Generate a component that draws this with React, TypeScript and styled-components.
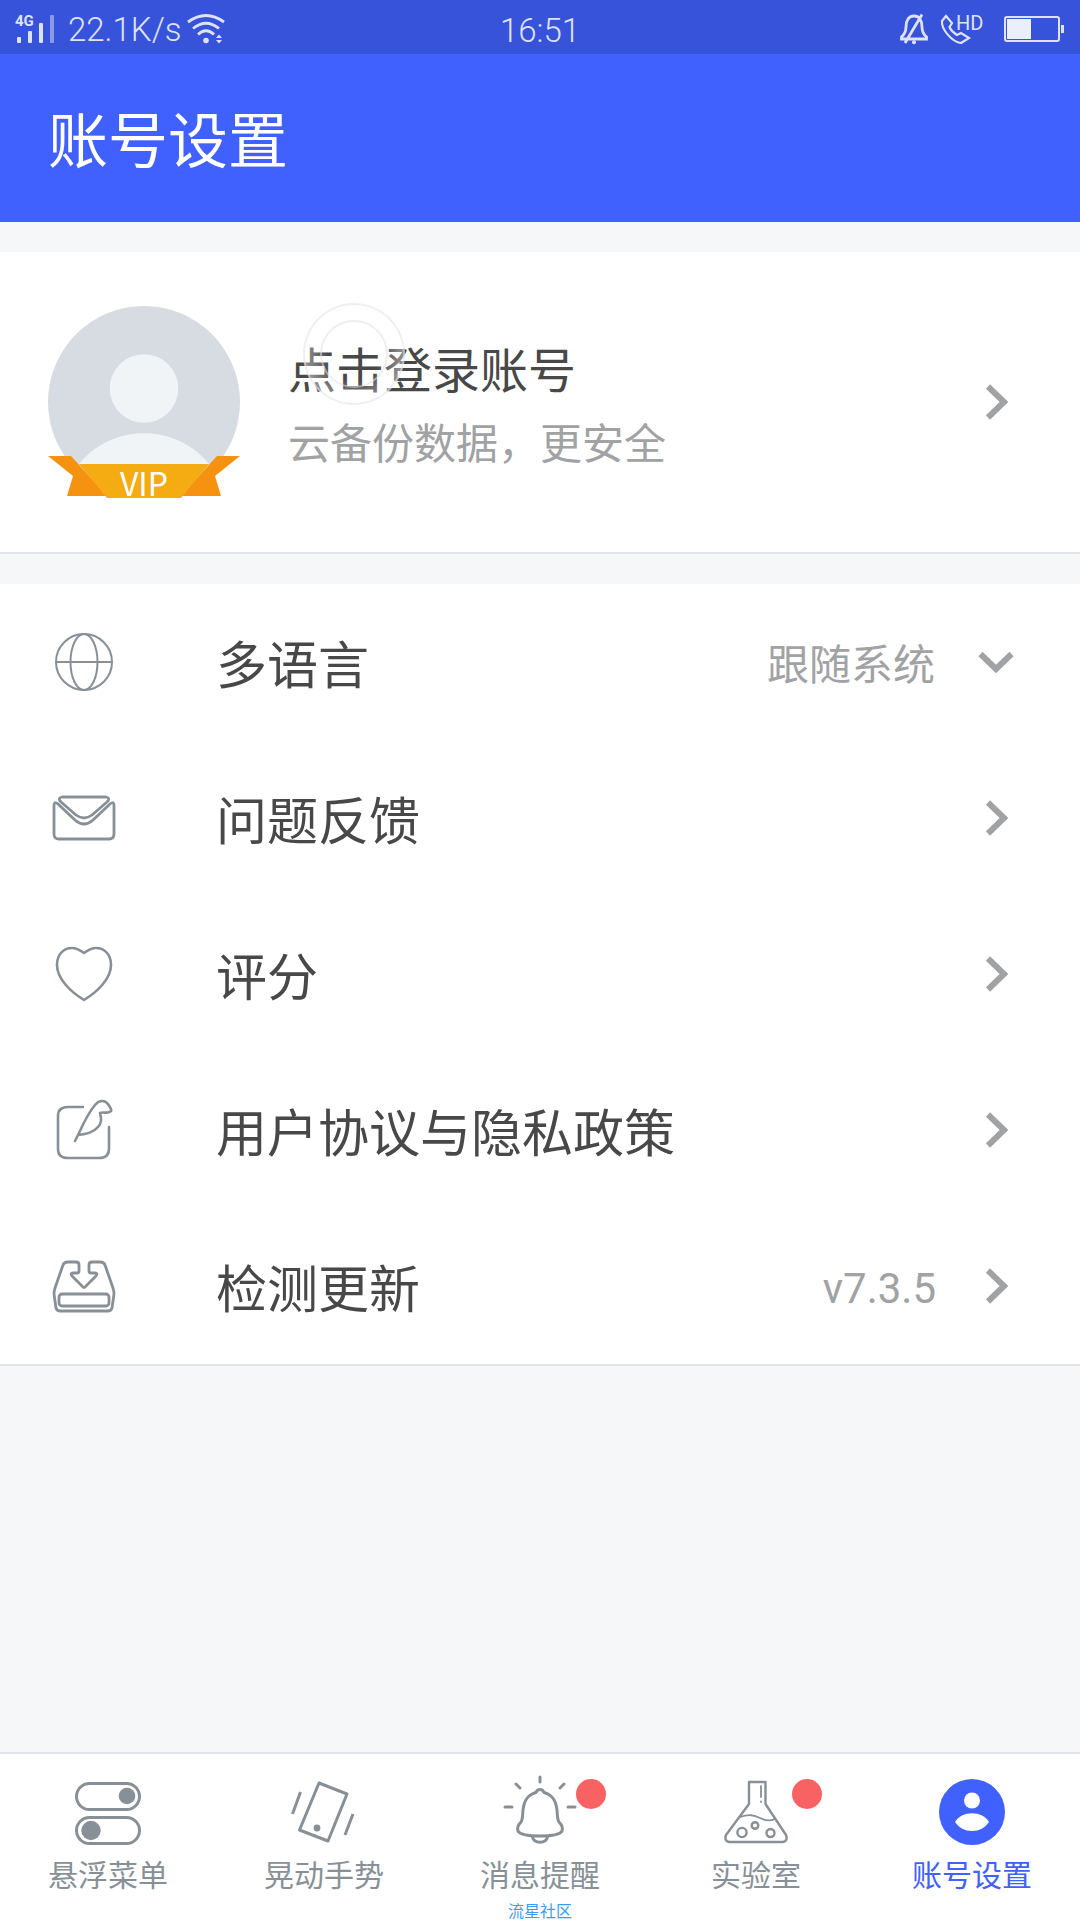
import React, { ReactNode } from "react";
import styled, { createGlobalStyle } from "styled-components";

const color = {
  primary: "#4161ff",
  primaryDark: "#3753d9",
  page: "#f5f7f9",
  line: "#e0e5ec",
  text: "#484848",
  muted: "#a1a2a4",
  icon: "#889097",
  badge: "#f96262",
};

const GlobalStyle = createGlobalStyle`
  * { box-sizing: border-box; }
  body {
    margin: 0;
    background: ${color.page};
    font-family: Roboto, "Noto Sans CJK SC", sans-serif;
    font-weight: 400;
    color: ${color.text};
  }
  button, select { font: inherit; color: inherit; }
  a { color: inherit; text-decoration: none; }
`;

const Screen = styled.div`
  position: relative;
  display: flex;
  flex-direction: column;
  min-height: 100vh;
`;

const StatusBar = styled.div`
  display: grid;
  grid-template-columns: 1fr auto 1fr;
  align-items: center;
  height: 54px;
  padding: 0 16px;
  background: ${color.primaryDark};
  color: #dde2fa;
  font-family: Roboto, sans-serif;
  font-size: 33px;
  font-weight: 350;
  line-height: 54px;
`;

const StatusGroup = styled.div<{ $end?: boolean }>`
  display: flex;
  align-items: center;
  justify-content: ${(p) => (p.$end ? "flex-end" : "flex-start")};
`;

const Speed = styled.span`
  padding-top: 2px;
  margin: 0 6px 0 12px;
`;

const Clock = styled.time`
  padding-top: 4px;
`;

const Header = styled.header`
  display: flex;
  align-items: center;
  height: 168px;
  padding: 10px 48px 0;
  background: ${color.primary};
  color: #fff;
`;

const Title = styled.h1`
  margin: 0;
  font-size: 60px;
  font-weight: 400;
  line-height: 72px;
`;

const Content = styled.main`
  flex: 1;
  display: flex;
  flex-direction: column;
  gap: 30px;
  padding: 30px 0;
`;

const ProfileCard = styled.button`
  position: relative;
  display: flex;
  align-items: center;
  gap: 48px;
  width: 100%;
  height: 302px;
  padding: 0 60px 0 48px;
  border: 0;
  border-bottom: 2px solid ${color.line};
  background: #fff;
  text-align: left;
`;

const ProfileText = styled.span`
  flex: 1;
  display: flex;
  flex-direction: column;
  gap: 4px;
  padding-top: 10px;
`;

const ProfileName = styled.span`
  font-size: 48px;
  line-height: 72px;
`;

const ProfileHint = styled.span`
  font-size: 42px;
  line-height: 66px;
  color: ${color.muted};
`;

const Ripple = styled.span`
  position: absolute;
  left: 303px;
  top: 51px;
  width: 102px;
  height: 102px;
  border: 2px solid rgba(225, 225, 225, 0.55);
  border-radius: 50%;
  background: radial-gradient(circle, rgba(255, 255, 255, 0) 38%, rgba(255, 255, 255, 0.4) 70%);

  &::after {
    content: "";
    position: absolute;
    inset: 15px;
    border: 2px solid rgba(225, 225, 225, 0.55);
    border-radius: 50%;
  }
`;

const List = styled.ul`
  margin: 0;
  padding: 0;
  list-style: none;
  background: #fff;
  border-bottom: 2px solid ${color.line};
`;

const rowLayout = `
  display: flex;
  align-items: center;
  height: 156px;
  padding: 0 60px 0 51px;
`;

const RowLink = styled.a`
  ${rowLayout}
`;

const RowField = styled.label`
  ${rowLayout}
`;

const RowLabel = styled.span`
  flex: 1;
  padding: 10px 0 0 99px;
  font-size: 51px;
  line-height: 72px;
`;

const RowValue = styled.span`
  padding-top: 6px;
  margin-right: 36px;
  font-size: 42px;
  line-height: 60px;
  color: ${color.muted};
`;

const RowSelect = styled.select`
  appearance: none;
  margin: 0 36px 0 0;
  padding: 8px 0 0;
  border: 0;
  background: transparent;
  font-size: 42px;
  line-height: 60px;
  color: ${color.muted};
`;

const TabBar = styled.nav`
  display: flex;
  height: 168px;
  border-top: 2px solid ${color.line};
  background: #fff;
`;

const Tab = styled.a<{ $active?: boolean }>`
  flex: 1;
  display: flex;
  flex-direction: column;
  align-items: center;
  gap: 9px;
  padding-top: 25px;
  font-size: 30px;
  line-height: 44px;
  color: ${(p) => (p.$active ? color.primary : color.icon)};
`;

const TabIcon = styled.span`
  position: relative;
  display: flex;
`;

const Badge = styled.span`
  position: absolute;
  left: 69px;
  top: 0;
  width: 30px;
  height: 30px;
  border-radius: 50%;
  background: ${color.badge};
`;

const Watermark = styled.span`
  position: absolute;
  left: 50%;
  bottom: 0;
  transform: translateX(-50%);
  font-size: 16px;
  line-height: 16px;
  color: #3d9bf0;
`;

const Drawing = styled.svg`
  display: block;
  flex: none;
  overflow: visible;
`;

const LineIcon = ({ width = 3, children }: { width?: number; children: ReactNode }) => (
  <Drawing
    width="66"
    height="66"
    viewBox="0 0 66 66"
    fill="none"
    stroke={color.icon}
    strokeWidth={width}
    strokeLinecap="round"
    strokeLinejoin="round"
    aria-hidden="true"
  >
    {children}
  </Drawing>
);

const GlobeIcon = () => (
  <LineIcon width={2}>
    <circle cx="33" cy="33" r="28" />
    <ellipse cx="33" cy="33" rx="13.5" ry="28" />
    <path d="M5 33H61" />
  </LineIcon>
);

const MailIcon = () => (
  <LineIcon width={2.8}>
    <path d="M11 12H55Q60 13 56 17L41 30Q33 36 25 30L10 17Q6 13 11 12Z" />
    <path d="M3 49V20Q3 16 7 19L24 35Q33 43 42 35L59 19Q63 16 63 20V49Q63 54 58 54H8Q3 54 3 49Z" />
  </LineIcon>
);

const HeartIcon = () => (
  <LineIcon width={2.6}>
    <path d="M33 12C29 9 25 7 21 7C12 7 6 14 6 24C6 38 20 51 33 59C46 51 60 38 60 24C60 14 54 7 45 7C41 7 37 9 33 12Z" />
  </LineIcon>
);

const QuillIcon = () => (
  <LineIcon width={2.6}>
    <path d="M32 10H17Q7 10 7 19V52Q7 61 17 61H48Q58 61 58 52V30" />
    <path d="M24 44L28 36C33 25 38 15 44 8C48 3 53 3 56 6C58 8 59 10 60 12C61 14 59 15 57 15.500C54 16 51 15 49 16C51 22 50 27 47 30C42 36 35 37 27 38" />
  </LineIcon>
);

const UpdateIcon = () => (
  <LineIcon width={2.8}>
    <path d="M17 9H25Q28 9 28 12V18Q28 20 26 20H22Q19 20 21 23L31 33Q33 36 35 33L45 23Q47 20 44 20H40Q38 20 38 18V12Q38 9 41 9H49Q53 9 54 12L62 35Q63 38 63 41L61 55Q60 58 57 58H9Q6 58 5 55L3 41Q3 38 4 35L12 12Q13 9 17 9Z" />
    <rect x="8" y="41" width="50" height="12" rx="3" />
  </LineIcon>
);

const TogglesIcon = () => (
  <LineIcon>
    <rect x="1.500" y="4.500" width="63" height="26" rx="13" />
    <rect x="1.500" y="38.500" width="63" height="26" rx="13" />
    <g fill={color.icon} stroke="none">
      <circle cx="52" cy="17" r="8.300" />
      <circle cx="16" cy="51.500" r="9.700" />
    </g>
  </LineIcon>
);

const ShakeIcon = () => (
  <LineIcon>
    <path d="M28 4L56 15L37 62L8.500 51Z" />
    <path strokeLinecap="butt" d="M9.500 13L1.500 35M62 35L54 56" />
    <circle cx="26" cy="49" r="3.400" fill={color.icon} stroke="none" />
  </LineIcon>
);

const BellIcon = () => (
  <LineIcon>
    <path d="M33 10.500Q30 10.500 29 13.500C20 16 17 22 16 31C15.500 36 16 40 14 43C11 46 10 49 11 52C13 56 24 57 33 57C42 57 53 56 55 52C56 49 55 46 52 43C50 40 50.500 36 50 31C49 22 46 16 37 13.500Q36 10.500 33 10.500Z" />
    <path d="M25.500 58C27 65 39 65 40.500 58" />
    <path d="M33-2V3M9 5L13 9M57 5L53 9M-2 28H5M61 28H68" />
  </LineIcon>
);

const FlaskIcon = () => (
  <LineIcon width={2.4}>
    <path d="M26 3H42.500V25L63 56Q65 62 60 63H6Q1 62 3 56L26 25Z" />
    <path strokeWidth="1.800" d="M17 38C26 35 31 36 37 39C43 42 48 42 52 40M38 7V18M38 22.500V23" />
    <circle cx="19" cy="53.500" r="4.600" />
    <circle cx="32" cy="46.500" r="3.300" />
    <circle cx="47.500" cy="54" r="4" />
  </LineIcon>
);

const AccountIcon = () => (
  <Drawing width="66" height="66" viewBox="0 0 66 66" fill="#fff" aria-hidden="true">
    <circle cx="33" cy="33" r="33" fill={color.primary} />
    <circle cx="33" cy="21.500" r="8" />
    <path d="M16 43C20 37 26 34.300 33 34.300S46 37 50 43C46 49 40 52 33 52S20 49 16 43Z" />
  </Drawing>
);

const Chevron = ({ down }: { down?: boolean }) => (
  <Drawing width="48" height="48" viewBox="0 0 48 48" fill="none" stroke={color.muted} strokeWidth="6" aria-hidden="true">
    <path d={down ? "M8.500 16L24 31L39.500 16" : "M16 8.500L32 24L16 39.500"} />
  </Drawing>
);

const Avatar = () => (
  <Drawing width="192" height="192" viewBox="0 0 192 192" role="img" aria-label="VIP">
    <circle cx="96" cy="96" r="96" fill="#d7dbe2" />
    <circle cx="96" cy="82.500" r="34.300" fill="#f0f4f7" />
    <path d="M31 158C64 117 128 117 161 158Z" fill="#f0f4f7" />
    <path d="M0 150H23L59 190H19L25 170ZM192 150H169L133 190H173L167 170Z" fill="#f59311" />
    <path d="M31 158H161L133 192H59Z" fill="#f5ab12" />
    <text x="96" y="190" textAnchor="middle" fill="#fff" fontSize="32" fontWeight="400" fontFamily="Noto Sans CJK SC, sans-serif">
      VIP
    </text>
  </Drawing>
);

const SignalIcon = () => (
  <Drawing width="40" height="54" viewBox="0 0 40 54" fill="currentColor" role="img" aria-label="4G">
    <text x="-1" y="24" fontSize="15" fontWeight="700" fontFamily="Roboto, sans-serif">
      4G
    </text>
    <rect x="1" y="35" width="4" height="6" rx="1" />
    <rect x="12" y="29" width="4" height="12" rx="1" />
    <rect x="23" y="21" width="4" height="20" rx="1" />
    <rect x="34" y="13" width="4" height="28" rx="1" opacity="0.5" />
  </Drawing>
);

const WifiIcon = () => (
  <Drawing width="38" height="54" viewBox="0 0 38 54" fill="none" stroke="currentColor" strokeWidth="2.800" aria-hidden="true">
    <path d="M0 20Q18 7 36 20M5 26.500Q18 16 31 26.500M10 32.500Q18 25 26 32.500" />
    <g fill="currentColor" stroke="none">
      <circle cx="18" cy="38.500" r="2.800" />
      <path d="M28 36L31 32.500L34 36ZM28 38L31 41.500L34 38Z" />
    </g>
  </Drawing>
);

const StatusIcons = () => (
  <Drawing width="164" height="54" viewBox="900 0 164 54" fill="none" stroke="currentColor" strokeWidth="2.800" aria-hidden="true">
    <path d="M901.500 37V35Q906 31 906 25C906 18 909 14 914 14S922 18 922 25Q922 31 926.500 35V37ZM922 12.500L905 41" />
    <circle cx="914" cy="40.300" r="2" fill="currentColor" stroke="none" />
    <path strokeWidth="2.200" d="M946 14L942 19C941 27 952 40 961 41L969 36L961 31L957 33Q951 29 949.500 25L952 21Z" />
    <text x="956" y="28" fontSize="20" fontWeight="400" fill="currentColor" stroke="none">
      HD
    </text>
    <rect x="1005" y="15" width="54" height="24" rx="2" strokeWidth="2" />
    <rect x="1007" y="17" width="24" height="20" fill="#ebeefb" stroke="none" />
    <rect x="1061" y="23" width="3" height="8" fill="currentColor" stroke="none" />
  </Drawing>
);

const links = [
  { label: "问题反馈", Icon: MailIcon },
  { label: "评分", Icon: HeartIcon },
  { label: "用户协议与隐私政策", Icon: QuillIcon },
  { label: "检测更新", Icon: UpdateIcon, value: "v7.3.5" },
];

const tabs = [
  { label: "悬浮菜单", Icon: TogglesIcon },
  { label: "晃动手势", Icon: ShakeIcon },
  { label: "消息提醒", Icon: BellIcon, badge: true },
  { label: "实验室", Icon: FlaskIcon, badge: true },
  { label: "账号设置", Icon: AccountIcon, active: true },
];

export default function App() {
  return (
    <Screen>
      <GlobalStyle />
      <StatusBar>
        <StatusGroup>
          <SignalIcon />
          <Speed>22.1K/s</Speed>
          <WifiIcon />
        </StatusGroup>
        <Clock>16:51</Clock>
        <StatusGroup $end>
          <StatusIcons />
        </StatusGroup>
      </StatusBar>
      <Header>
        <Title>账号设置</Title>
      </Header>
      <Content>
        <ProfileCard type="button">
          <Avatar />
          <ProfileText>
            <ProfileName>点击登录账号</ProfileName>
            <ProfileHint>云备份数据，更安全</ProfileHint>
          </ProfileText>
          <Chevron />
          <Ripple />
        </ProfileCard>
        <List>
          <li>
            <RowField htmlFor="language">
              <GlobeIcon />
              <RowLabel>多语言</RowLabel>
              <RowSelect id="language">
                <option>跟随系统</option>
              </RowSelect>
              <Chevron down />
            </RowField>
          </li>
          {links.map(({ label, Icon, value }) => (
            <li key={label}>
              <RowLink href="#">
                <Icon />
                <RowLabel>{label}</RowLabel>
                {value && <RowValue>{value}</RowValue>}
                <Chevron />
              </RowLink>
            </li>
          ))}
        </List>
      </Content>
      <TabBar>
        {tabs.map(({ label, Icon, badge, active }) => (
          <Tab key={label} href="#" $active={active} aria-current={active ? "page" : undefined}>
            <TabIcon>
              <Icon />
              {badge && <Badge />}
            </TabIcon>
            {label}
          </Tab>
        ))}
      </TabBar>
      <Watermark>流星社区</Watermark>
    </Screen>
  );
}
